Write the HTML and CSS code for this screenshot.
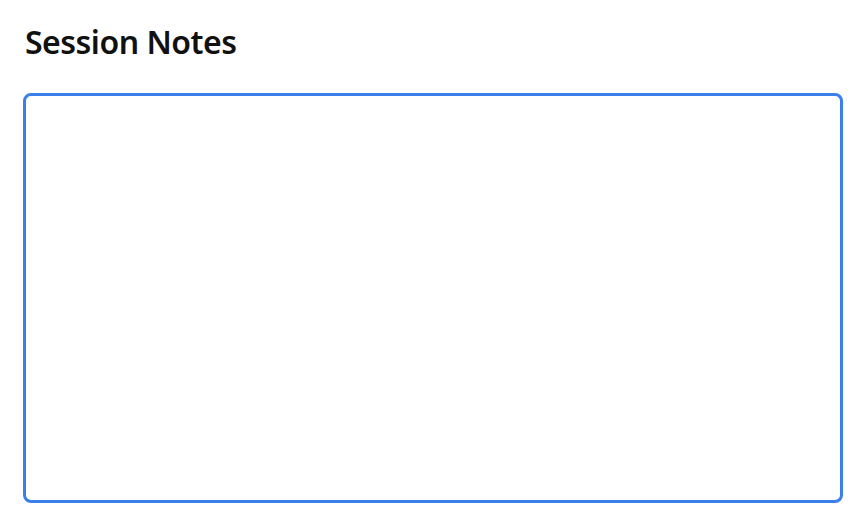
FILE: index.html
```html
<!DOCTYPE html>
<html>
<head>
<meta charset="utf-8">
<link rel="stylesheet" href="styles.css">
</head>
<body>
<main class="page">
  <h2 class="title">Session Notes</h2>
  <textarea class="notes"></textarea>
</main>
</body>
</html>
```
FILE: styles.css
```css
html, body {
  margin: 0;
  padding: 0;
  background: #ffffff;
}
.page {
  display: flex;
  flex-direction: column;
  padding: 20px 23px 21px 23px;
  box-sizing: border-box;
  height: 524px;
}
.title {
  margin: 0 0 0 2px;
  font-family: "Noto Sans", "Open Sans", sans-serif;
  font-weight: 600;
  font-size: 32px;
  line-height: 44px;
  color: #111111;
  letter-spacing: -0.5px;
}
.notes {
  margin-top: 29px;
  flex: 1;
  width: 100%;
  box-sizing: border-box;
  border: 3px solid #3a80ea;
  border-radius: 8px;
  outline: none;
  resize: none;
  background: #ffffff;
}
```
